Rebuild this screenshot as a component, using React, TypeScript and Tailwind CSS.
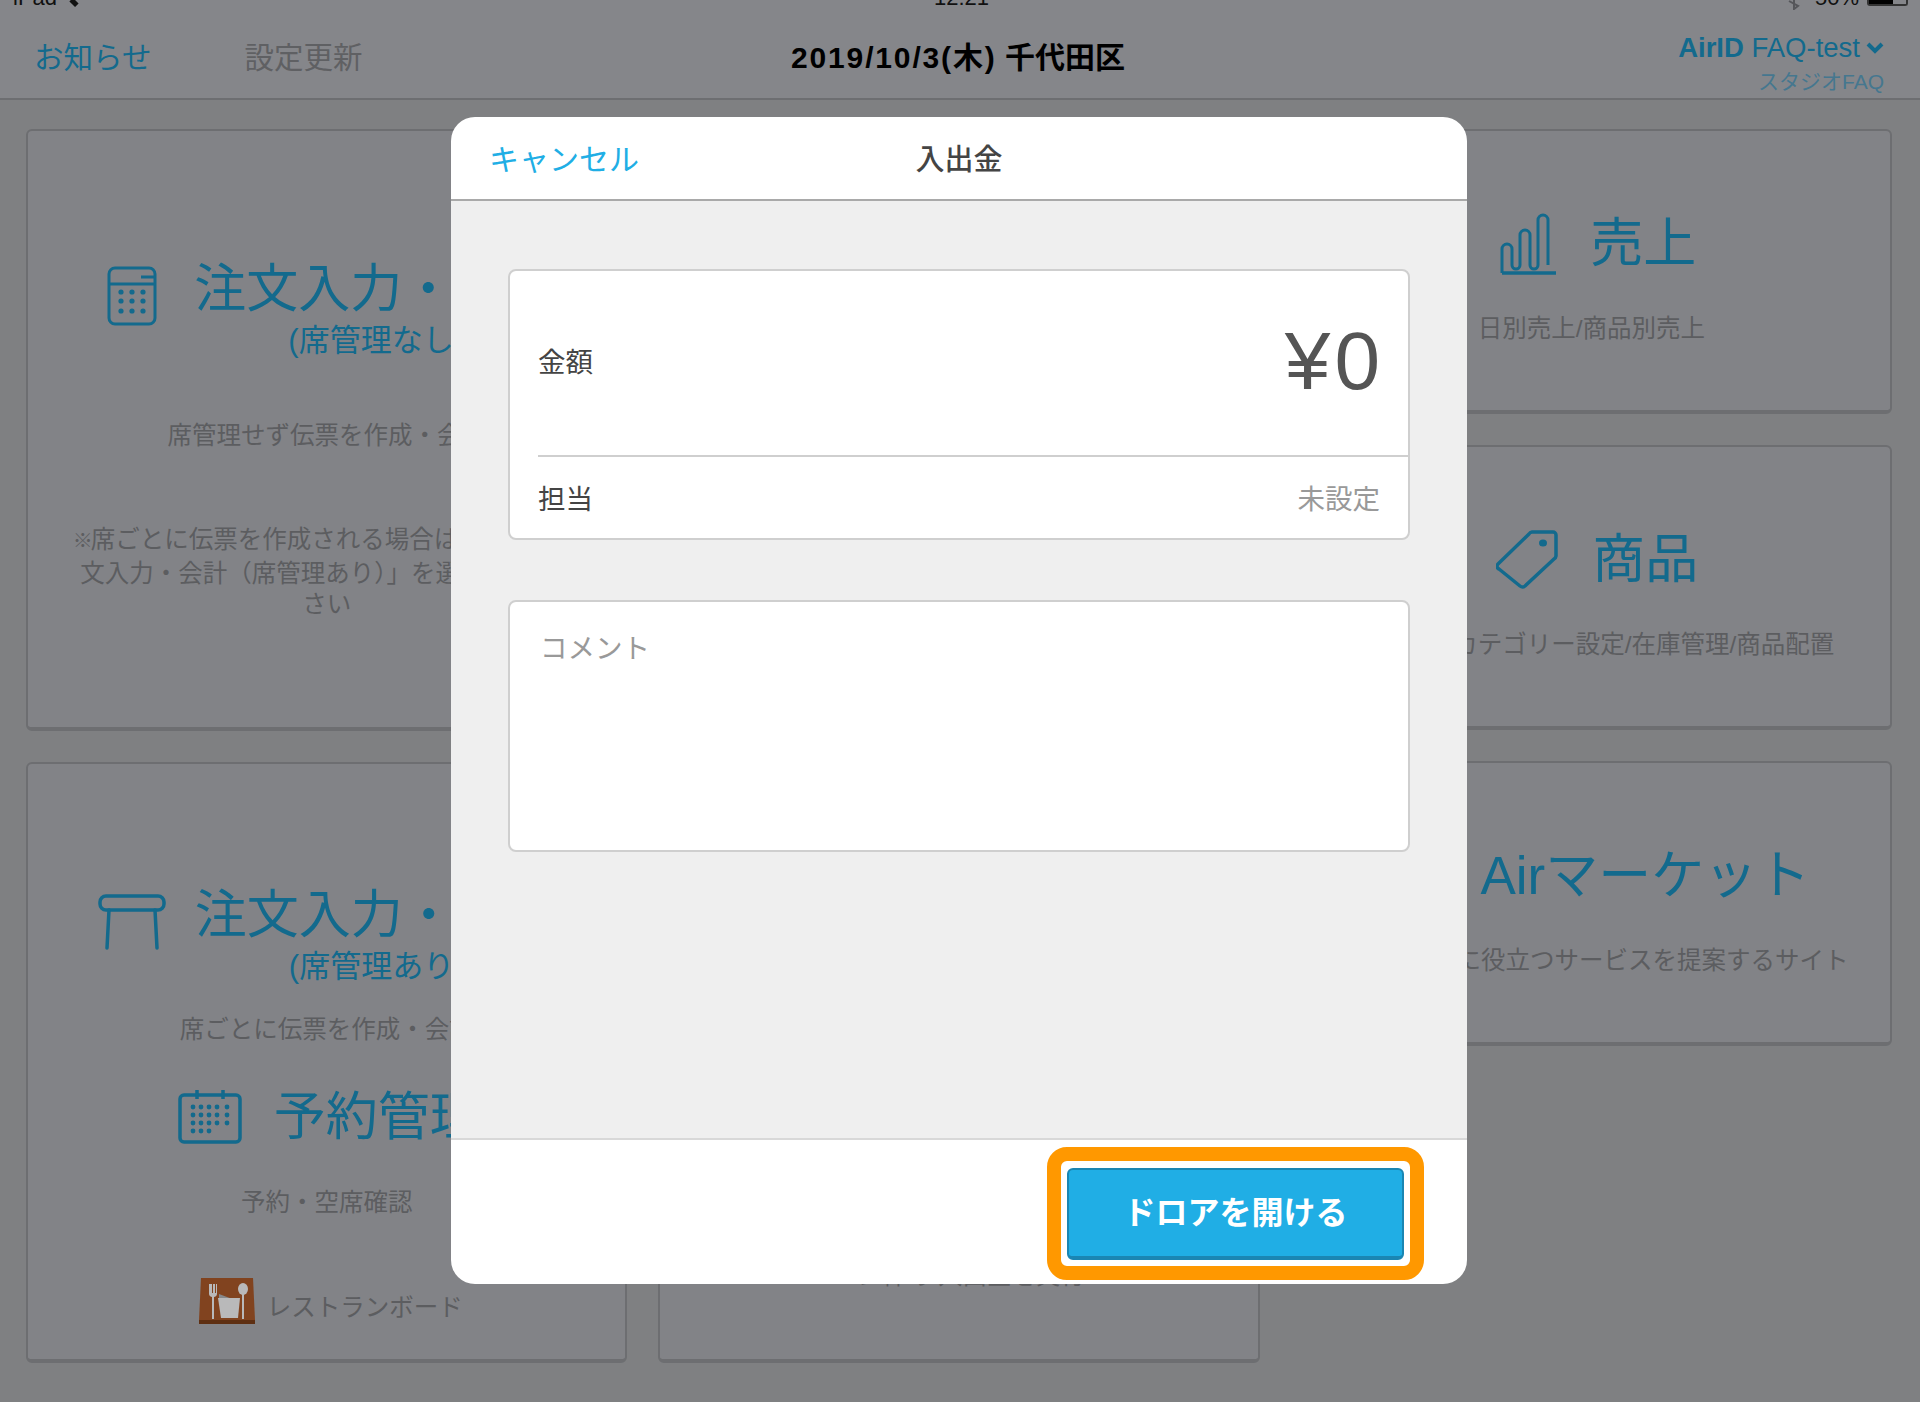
import React from 'react';

const sans = '"Liberation Sans", "Noto Sans CJK JP", sans-serif';

const CalculatorIcon = () => (
  <svg width="50" height="60" viewBox="0 0 50 60" fill="none" stroke="#136a8d" strokeWidth="3">
    <rect x="2" y="2" width="46" height="56" rx="6" />
    <path d="M2 18h46M34 11h14" />
    <g fill="#136a8d" stroke="none">
      {[26, 35, 45].map((y) =>
        [14, 25, 36].map((x) => <circle key={`${x}-${y}`} cx={x} cy={y} r="2.6" />)
      )}
    </g>
  </svg>
);

const StoolIcon = () => (
  <svg width="68" height="56" viewBox="0 0 68 56" fill="none" stroke="#136a8d" strokeWidth="3.5" strokeLinecap="round">
    <rect x="2" y="2" width="64" height="14" rx="6" />
    <path d="M11 16 9 54M57 16l2 38" />
  </svg>
);

const CalendarIcon = () => (
  <svg width="64" height="54" viewBox="0 0 64 54" fill="none" stroke="#136a8d" strokeWidth="3.5">
    <rect x="2" y="5" width="60" height="47" rx="4" />
    <path d="M19 0v9M45 0v9" />
    <g fill="#136a8d" stroke="none">
      {[17, 25, 33, 41].map((y, r) =>
        [15, 23, 31, 39, 49].map((x, c) =>
          r === 3 && c > 2 ? null : <circle key={`${x}-${y}`} cx={x} cy={y} r="2.4" />
        )
      )}
    </g>
  </svg>
);

const SalesIcon = () => (
  <svg width="56" height="62" viewBox="0 0 56 62" fill="none" stroke="#136a8d" strokeWidth="3">
    <path d="M2 60h54" strokeWidth="3.5" />
    <path d="M2 60V36a5 5 0 0 1 10 0v16a4 4 0 0 0 8 0V22a5 5 0 0 1 10 0v30a4 4 0 0 0 8 0V7a5 5 0 0 1 10 0v45" />
  </svg>
);

const TagIcon = () => (
  <svg width="62" height="60" viewBox="0 0 62 60" fill="none" stroke="#136a8d" strokeWidth="3.5" strokeLinejoin="round">
    <path d="M2 34 33 4a4 4 0 0 1 3-2h21a3 3 0 0 1 3 3v21a4 4 0 0 1-2 3L29 56a4 4 0 0 1-5 0L3 39a3 3 0 0 1-1-5Z" />
    <ellipse cx="47" cy="13" rx="4" ry="3.5" fill="#136a8d" stroke="none" />
  </svg>
);

const BoardIcon = () => (
  <svg width="56" height="46" viewBox="0 0 56 46">
    <path d="M2 0h52l2 42H0Z" fill="#81431f" />
    <path d="M0 42h56v4H0Z" fill="#5e2f12" />
    <path d="M20 16l16 6-16 2Z" fill="#87888a" />
    <path d="M19 20h22l-2 20H22Z" fill="#b9b9ba" />
    <path d="M10 6v10c0 2 2 3 3 3v22h2V19c1 0 3-1 3-3V6h-1v9h-1V6h-2v9h-1V6Z" fill="#b9b9ba" />
    <ellipse cx="44" cy="11" rx="5" ry="6" fill="#b9b9ba" />
    <path d="M43 15h2v26h-2Z" fill="#b9b9ba" />
  </svg>
);

const Card = ({ className, children }: { className?: string; children: React.ReactNode }) => (
  <div className={`flex flex-col items-center rounded-[6px] border-[2px] border-b-[4px] border-[#6d6e71] bg-[#828387] ${className ?? ''}`}>
    {children}
  </div>
);

const SmallCard = ({ icon, title, text, shift }: { icon: React.ReactNode; title: string; text: string; shift?: string }) => (
  <Card className="h-[285px] pt-[81px]">
    <div className={`flex items-center gap-[34px] ${shift ?? ''}`}>
      {icon}
      <span className="text-[53px] leading-[64px] text-[#136a8d]">{title}</span>
    </div>
    <p className="mt-[35px] whitespace-nowrap text-[24.5px] leading-[36px] text-[#5c5d60]">{text}</p>
  </Card>
);

export default function App() {
  return (
    <div className="relative h-[1402px] w-[1920px] overflow-hidden bg-[#7f8082]" style={{ fontFamily: sans }}>
      {/* top bar, status line is cut off by the screenshot */}
      <header className="relative h-[100px] border-b-[2px] border-[#6d6e71] bg-[#85868a]">
        <div className="relative h-[11px] overflow-hidden text-[22px] leading-[26px] text-[#111]">
          <span className="absolute bottom-0 left-[13px]">iPad</span>
          <span className="absolute left-[70px] top-0 h-[5px] w-[8px] rotate-45 bg-[#111]" />
          <span className="absolute bottom-0 left-[934px]">12:21</span>
          <svg className="absolute left-[1788px] top-0" width="12" height="10" viewBox="0 0 12 10" fill="none" stroke="#55565a" strokeWidth="2">
            <path d="M1 1l9 5-4 3V0" />
          </svg>
          <span className="absolute bottom-0 left-[1815px]">50%</span>
        </div>
        <div className="absolute left-[1867px] top-0 h-[6px] w-[41px] rounded-b-[3px] border-[2px] border-t-0 border-[#333]">
          <div className="h-full w-[24px] bg-black" />
        </div>
        <div className="relative flex items-center px-[34px] pt-[29px]">
          <span className="text-[29.5px] leading-[36px] text-[#136a8d]">お知らせ</span>
          <span className="ml-[93px] text-[29.5px] leading-[36px] text-[#5f6063]">設定更新</span>
          <span className="absolute left-[791px] top-[29px] text-[30px] font-semibold leading-[36px] text-black">
            <span className="tracking-[1.85px]">2019/10/3(木)</span> 千代田区
          </span>
        </div>
        <div className="absolute right-[36px] top-[33px] flex flex-col items-end">
          <div className="flex items-center gap-[6px] text-[27.5px] leading-[30px] text-[#136a8d]">
            <span><b>AirID</b> FAQ-test</span>
            <svg width="18" height="12" viewBox="0 0 18 12" fill="none" stroke="#136a8d" strokeWidth="4">
              <path d="M2 2l7 7 7-7" />
            </svg>
          </div>
          <span className="mt-[6px] text-[21px] leading-[26px] text-[#45778f]">スタジオFAQ</span>
        </div>
      </header>

      {/* menu behind the dialog */}
      <main className="grid grid-cols-3 gap-x-[31px] pl-[26px] pr-[28px] pt-[29px]">
        <div className="flex flex-col gap-[31px]">
          <Card className="h-[602px] pt-[126px]">
            <div className="ml-[12px] flex items-start gap-[37px]">
              <div className="mt-[9px]"><CalculatorIcon /></div>
              <div className="flex flex-col items-center">
                <span className="text-[52px] leading-[64px] text-[#136a8d]">注文入力・会計</span>
                <span className="text-[31px] leading-[39px] text-[#136a8d]">(席管理なし)</span>
              </div>
            </div>
            <p className="mt-[58px] text-[24.5px] leading-[36px] text-[#5c5d60]">席管理せず伝票を作成・会計</p>
            <p className="mt-[70px] text-center text-[24.5px] leading-[31.5px] text-[#5c5d60]">
              <span className="text-[20px] tracking-[-2px]">※</span>席ごとに伝票を作成される場合は、下の「注
              <br />
              <span className="pl-[8px]">文入力・会計（席管理あり）」を選択してくだ</span>
              <br />
              さい
            </p>
          </Card>
          <Card className="h-[601px] pt-[119px]">
            <div className="ml-[3px] flex items-start gap-[29px]">
              <div className="mt-[11px]"><StoolIcon /></div>
              <div className="flex flex-col items-center">
                <span className="text-[52px] leading-[64px] text-[#136a8d]">注文入力・会計</span>
                <span className="text-[31px] leading-[39px] text-[#136a8d]">(席管理あり)</span>
              </div>
            </div>
            <p className="mt-[26px] text-[24.5px] leading-[36px] text-[#5c5d60]">席ごとに伝票を作成・会計</p>
            <div className="ml-[6px] mt-[37px] flex items-center gap-[32px]">
              <CalendarIcon />
              <span className="text-[52px] leading-[64px] text-[#136a8d]">予約管理</span>
            </div>
            <p className="mt-[36px] text-[24.5px] leading-[36px] text-[#5c5d60]">予約・空席確認</p>
            <div className="ml-[8px] mt-[55px] flex items-center gap-[12px]">
              <BoardIcon />
              <span className="pt-[14px] text-[24.5px] leading-[36px] text-[#5c5d60]">レストランボード</span>
            </div>
          </Card>
        </div>

        <div className="flex flex-col justify-end gap-[31px]">
          <Card className="h-[601px] justify-end pb-[65px]">
            <p className="text-[24.5px] leading-[36px] text-[#5c5d60]">レジ締め/入出金を実行</p>
          </Card>
        </div>

        <div className="flex flex-col gap-[31px]">
          <SmallCard icon={<SalesIcon />} title="売上" text="日別売上/商品別売上" shift="ml-[14px]" />
          <SmallCard icon={<TagIcon />} title="商品" text="メニュー/カテゴリー設定/在庫管理/商品配置" shift="ml-[12px]" />
          <SmallCard icon={<div className="h-[60px] w-[74px]" />} title="Airマーケット" text="お店の運営に役立つサービスを提案するサイト" />
        </div>
      </main>

      {/* dialog */}
      <div className="absolute left-[451px] top-[117px] flex h-[1167px] w-[1016px] flex-col overflow-hidden rounded-[24px] bg-white">
        <div className="relative flex h-[84px] shrink-0 items-center justify-center border-b-[2px] border-[#a9a9a9] pt-[5px]">
          <span className="absolute left-[38px] -mt-[3px] text-[30px] text-[#20aee5]">キャンセル</span>
          <span className="text-[29px] font-medium text-[#444]">入出金</span>
        </div>
        <div className="flex flex-1 flex-col gap-[60px] bg-[#efefef] px-[57px] pt-[68px]">
          <div className="rounded-[8px] border-[2px] border-[#cfcfcf] bg-white">
            <div className="ml-[28px] flex h-[186px] items-center justify-between border-b-[2px] border-[#cfcfcf] pr-[28px]">
              <span className="text-[27.5px] text-[#444]">金額</span>
              <span className="-mt-[4px] text-[82px] leading-none text-[#555]"><span className="mr-[4px]">¥</span>0</span>
            </div>
            <div className="flex h-[81px] items-center justify-between px-[28px] pt-[4px]">
              <span className="text-[27.5px] text-[#444]">担当</span>
              <span className="text-[27.5px] text-[#999]">未設定</span>
            </div>
          </div>
          <div className="h-[252px] rounded-[8px] border-[2px] border-[#cfcfcf] bg-white px-[30px] pt-[26px]">
            <span className="text-[27.5px] text-[#999]">コメント</span>
          </div>
        </div>
        <div className="flex h-[146px] shrink-0 justify-end border-t-[2px] border-[#d8d8d8] pr-[43px] pt-[7px]">
          <div className="h-[133px] w-[377px] rounded-[20px] border-[14px] border-[#ff9800] bg-white px-[6px] pt-[7px]">
            <button className="h-[92px] w-full rounded-[6px] border-[2px] border-b-[4px] border-[#1a86b3] bg-[#20aee5] text-[32px] font-bold text-white">
              ドロアを開ける
            </button>
          </div>
        </div>
      </div>
    </div>
  );
}
